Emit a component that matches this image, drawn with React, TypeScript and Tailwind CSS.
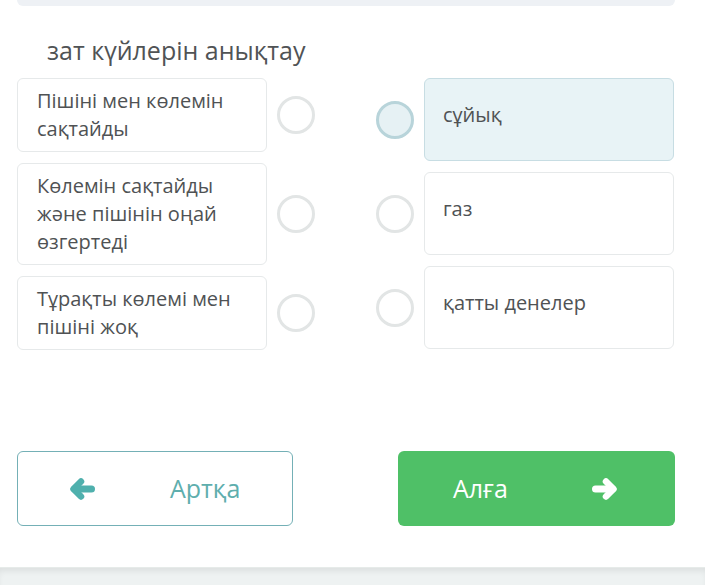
const left = [
  ["Пішіні мен көлемін", "сақтайды"],
  ["Көлемін сақтайды", "және пішінін оңай", "өзгертеді"],
  ["Тұрақты көлемі мен", "пішіні жоқ"],
];
const right = ["сұйық", "газ", "қатты денелер"];

function Arrow({ dir, color }: { dir: "left" | "right"; color: string }) {
  return (
    <svg width="25" height="22" viewBox="0 0 25 22" className={dir === "right" ? "-scale-x-100" : ""}>
      <g stroke={color} fill="none" strokeLinecap="round" strokeLinejoin="round">
        <polyline points="11,3.5 3.5,11 11,18.5" strokeWidth="6.5" />
        <line x1="4.5" y1="11" x2="21.5" y2="11" strokeWidth="7" />
      </g>
    </svg>
  );
}

export default function App() {
  return (
    <div
      className="relative w-[705px] h-[585px] bg-white overflow-hidden text-[#4f5254]"
      style={{ fontFamily: '"Open Sans", "Noto Sans", sans-serif' }}
    >
      <div className="mx-[17px] mr-[30px] h-[6px] rounded-b-[8px] bg-[#eef1f5]" />
      <div className="pl-[47px] pt-[28px] text-[25px] leading-[33px] text-[#505355]">
        зат күйлерін анықтау
      </div>
      <div className="flex justify-between pl-[17px] pr-[31px] mt-[11px]">
        <div className="flex flex-col gap-[11px]">
          {left.map((lines, i) => (
            <div key={i} className="flex items-center gap-[10px]">
              <div className="w-[250px] rounded-[6px] border border-[#e6e9ea] px-[19px] py-[8px] text-[20px] leading-[28px]">
                {lines.map((l, j) => (
                  <div key={j}>{l}</div>
                ))}
              </div>
              <div className="w-[38px] h-[38px] rounded-full border-[3px] border-[#e2e5e5]" />
            </div>
          ))}
        </div>
        <div className="flex flex-col gap-[11px]">
          {right.map((t, i) => (
            <div key={i} className="flex items-center gap-[10px]">
              <div
                className={
                  i === 0
                    ? "w-[38px] h-[38px] rounded-full border-[3px] border-[#b8d4da] bg-[#e6f1f4]"
                    : "w-[38px] h-[38px] rounded-full border-[3px] border-[#e2e5e5]"
                }
              />
              <div
                className={
                  i === 0
                    ? "w-[250px] h-[83px] rounded-[6px] border border-[#c7dde3] bg-[#e8f3f6] px-[18px] pt-[22px] text-[20px] leading-[28px]"
                    : "w-[250px] h-[83px] rounded-[6px] border border-[#e6e9ea] px-[18px] pt-[22px] text-[20px] leading-[28px]"
                }
              >
                {t}
              </div>
            </div>
          ))}
        </div>
      </div>
      <div className="flex justify-between pl-[17px] pr-[30px] mt-[101px]">
        <div className="w-[276px] h-[75px] rounded-[6px] border border-[#74b0b6] flex items-center pl-[52px] text-[#5eaead]">
          <Arrow dir="left" color="#4fb0ad" />
          <span className="ml-[75px] text-[25px]">Артқа</span>
        </div>
        <div className="w-[277px] h-[75px] rounded-[6px] bg-[#4fc067] flex items-center pl-[55px] text-white">
          <span className="text-[25px]">Алға</span>
          <span className="ml-[84px] flex">
            <Arrow dir="right" color="#ffffff" />
          </span>
        </div>
      </div>
      <div className="absolute left-0 right-0 bottom-0 h-[18px] bg-[#eef2f2] shadow-[inset_0_5px_6px_-2px_rgba(0,0,0,0.08)] border-t border-[#e6ebe9]" />
    </div>
  );
}
